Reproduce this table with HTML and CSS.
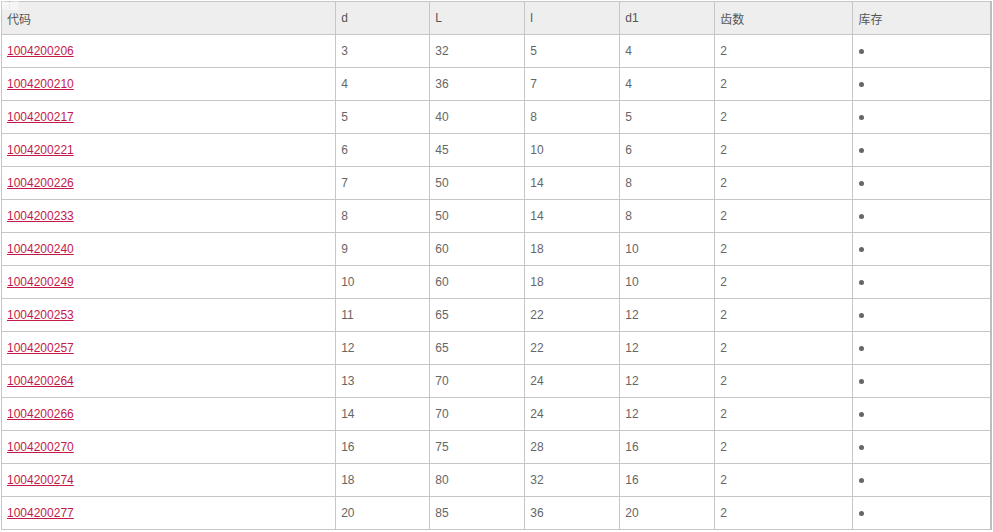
FILE: index.html
```html
<!DOCTYPE html>
<html lang="zh">
<head>
<meta charset="utf-8">
<link rel="stylesheet" href="styles.css">
</head>
<body>
<div class="wrap">
<span class="tag">数据</span>
<table class="grid">
<colgroup>
<col class="c1"><col class="c2"><col class="c3"><col class="c4"><col class="c5"><col class="c6"><col class="c7">
</colgroup>
<thead>
<tr><th>代码</th><th>d</th><th>L</th><th>l</th><th>d1</th><th>齿数</th><th>库存</th></tr>
</thead>
<tbody>
<tr><td><a href="#">1004200206</a></td><td>3</td><td>32</td><td>5</td><td>4</td><td>2</td><td><span class="dot"></span></td></tr>
<tr><td><a href="#">1004200210</a></td><td>4</td><td>36</td><td>7</td><td>4</td><td>2</td><td><span class="dot"></span></td></tr>
<tr><td><a href="#">1004200217</a></td><td>5</td><td>40</td><td>8</td><td>5</td><td>2</td><td><span class="dot"></span></td></tr>
<tr><td><a href="#">1004200221</a></td><td>6</td><td>45</td><td>10</td><td>6</td><td>2</td><td><span class="dot"></span></td></tr>
<tr><td><a href="#">1004200226</a></td><td>7</td><td>50</td><td>14</td><td>8</td><td>2</td><td><span class="dot"></span></td></tr>
<tr><td><a href="#">1004200233</a></td><td>8</td><td>50</td><td>14</td><td>8</td><td>2</td><td><span class="dot"></span></td></tr>
<tr><td><a href="#">1004200240</a></td><td>9</td><td>60</td><td>18</td><td>10</td><td>2</td><td><span class="dot"></span></td></tr>
<tr><td><a href="#">1004200249</a></td><td>10</td><td>60</td><td>18</td><td>10</td><td>2</td><td><span class="dot"></span></td></tr>
<tr><td><a href="#">1004200253</a></td><td>11</td><td>65</td><td>22</td><td>12</td><td>2</td><td><span class="dot"></span></td></tr>
<tr><td><a href="#">1004200257</a></td><td>12</td><td>65</td><td>22</td><td>12</td><td>2</td><td><span class="dot"></span></td></tr>
<tr><td><a href="#">1004200264</a></td><td>13</td><td>70</td><td>24</td><td>12</td><td>2</td><td><span class="dot"></span></td></tr>
<tr><td><a href="#">1004200266</a></td><td>14</td><td>70</td><td>24</td><td>12</td><td>2</td><td><span class="dot"></span></td></tr>
<tr><td><a href="#">1004200270</a></td><td>16</td><td>75</td><td>28</td><td>16</td><td>2</td><td><span class="dot"></span></td></tr>
<tr><td><a href="#">1004200274</a></td><td>18</td><td>80</td><td>32</td><td>16</td><td>2</td><td><span class="dot"></span></td></tr>
<tr><td><a href="#">1004200277</a></td><td>20</td><td>85</td><td>36</td><td>20</td><td>2</td><td><span class="dot"></span></td></tr>
</tbody>
</table>
</div>
</body>
</html>
```
FILE: styles.css
```css
html, body {
  margin: 0;
  padding: 0;
  background: #fff;
}
body {
  padding: 1px 0 0 1px;
  font-family: "Liberation Sans", Arial, "Noto Sans CJK SC", sans-serif;
  font-size: 12px;
  color: #666;
}
.wrap {
  position: relative;
  width: 992px;
}
.tag {
  position: absolute;
  left: 0;
  top: 0;
  font-size: 9px;
  line-height: 10px;
  color: #fff;
  opacity: 0.9;
  font-family: "Noto Sans CJK SC", sans-serif;
}
.grid {
  border-collapse: collapse;
  table-layout: fixed;
  width: 991px;
  border: 1px solid #c6c6c6;
  border-right: 2px solid #bdbdbd;
}
.c1 { width: 334px; }
.c2 { width: 94px; }
.c3 { width: 95px; }
.c4 { width: 95px; }
.c5 { width: 95px; }
.c6 { width: 138px; }
.c7 { width: 138px; }
.grid th,
.grid td {
  border: 1px solid #c6c6c6;
  padding: 0 5px;
  text-align: left;
  font-weight: normal;
  vertical-align: middle;
  box-sizing: border-box;
}
.grid th {
  background: #eeeeee;
  color: #555;
  height: 33px;
}
.grid td {
  height: 33px;
}
.grid a {
  color: #c41a4a;
  text-decoration: underline;
}
.dot {
  display: inline-block;
  width: 5px;
  height: 5px;
  border-radius: 50%;
  background: #666;
  vertical-align: middle;
  margin-left: 1px;
}
```
